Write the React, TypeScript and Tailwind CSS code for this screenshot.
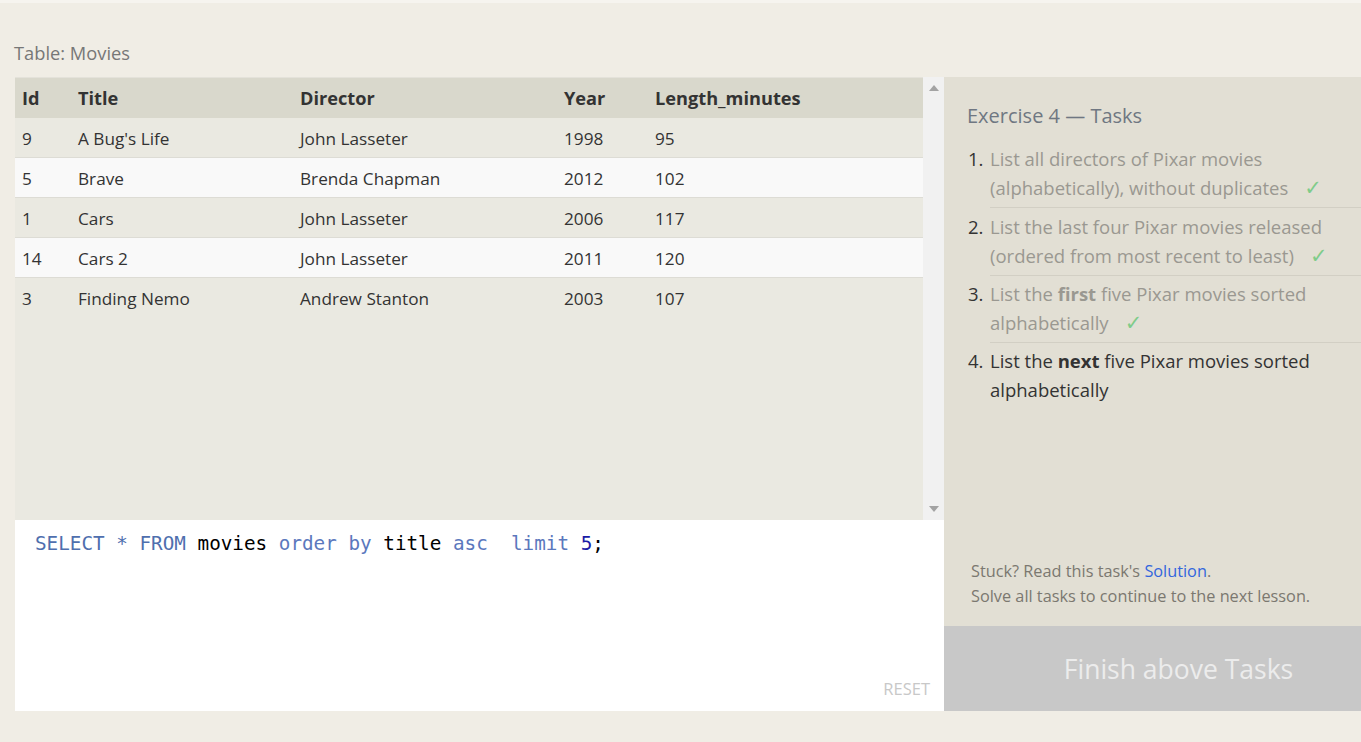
import React from "react";

const rows = [
  ["9", "A Bug's Life", "John Lasseter", "1998", "95"],
  ["5", "Brave", "Brenda Chapman", "2012", "102"],
  ["1", "Cars", "John Lasseter", "2006", "117"],
  ["14", "Cars 2", "John Lasseter", "2011", "120"],
  ["3", "Finding Nemo", "Andrew Stanton", "2003", "107"],
];

function Check() {
  return (
    <span className="ml-[16px] text-[21px] leading-[20px] text-[#7fcc8a]" style={{ fontFamily: '"DejaVu Sans", sans-serif' }}>
      ✓
    </span>
  );
}

export default function App() {
  return (
    <div
      className="w-[1361px] h-[742px] bg-[#f0ede5] overflow-hidden"
      style={{ fontFamily: '"Open Sans", sans-serif' }}
    >
      <div className="h-[3px] bg-[#f6f4ef]" />
      <div className="pl-[14px] pt-[38px] h-[74px] text-[18.3px] leading-[24px] text-[#777]">
        Table: Movies
      </div>
      <div className="flex ml-[15px]">
        <div className="w-[929px] flex flex-col">
          <div className="flex h-[443px] bg-[#eae9e1]">
            <div className="w-[908px]">
              <div className="flex h-[41px] items-center pt-[2px] bg-[#d9d8cc] border-t border-[#e4e2da] text-[18.2px] font-bold text-[#333]">
                <div className="w-[63px] pl-[7px]">Id</div>
                <div className="w-[222px]">Title</div>
                <div className="w-[264px]">Director</div>
                <div className="w-[91px]">Year</div>
                <div>Length_minutes</div>
              </div>
              {rows.map((r, i) => (
                <div
                  key={i}
                  className={`flex h-[40px] items-center pt-[2px] text-[17.2px] text-[#333] ${
                    i < rows.length - 1 ? "border-b border-[#dddcd5]" : ""
                  } ${i % 2 === 0 ? "bg-[#eae9e1]" : "bg-[#f9f9f9]"}`}
                >
                  <div className="w-[63px] pl-[7px]">{r[0]}</div>
                  <div className="w-[222px]">{r[1]}</div>
                  <div className="w-[264px]">{r[2]}</div>
                  <div className="w-[91px]">{r[3]}</div>
                  <div>{r[4]}</div>
                </div>
              ))}
            </div>
            <div className="w-[21px] bg-[#f1f1f1] flex flex-col justify-between items-center py-[8px]">
              <svg width="10" height="6" viewBox="0 0 10 6">
                <path d="M5 0 L10 6 L0 6 Z" fill="#a3a3a3" />
              </svg>
              <svg width="10" height="6" viewBox="0 0 10 6">
                <path d="M0 0 L10 0 L5 6 Z" fill="#a3a3a3" />
              </svg>
            </div>
          </div>
          <div className="h-[191px] bg-white flex flex-col">
            <div
              className="pl-[20px] pt-[12px] text-[19.3px] leading-[24px] flex-1 whitespace-pre"
              style={{ fontFamily: '"DejaVu Sans Mono", monospace' }}
            >
              <span className="text-[#4f6fae]">SELECT</span>
              <span className="text-[#4f6fae]"> * </span>
              <span className="text-[#4f6fae]">FROM</span>
              <span className="text-black"> movies </span>
              <span className="text-[#5b78bd]">order by</span>
              <span className="text-black"> title </span>
              <span className="text-[#5b78bd]">asc</span>
              <span>{"  "}</span>
              <span className="text-[#5b78bd]">limit</span>
              <span> </span>
              <span className="text-[#1a1aa6]">5</span>
              <span className="text-black">;</span>
            </div>
            <div className="text-right pr-[14px] pb-[12px] text-[16.5px] leading-[20px] text-[#c8c8c8]">
              RESET
            </div>
          </div>
        </div>
        <div className="w-[417px] flex flex-col">
          <div className="h-[549px] bg-[#e2dfd4] flex flex-col">
            <div className="pl-[23px] pt-[26px] text-[20px] leading-[26px] text-[#6f7782]">
              Exercise 4 — Tasks
            </div>
            <ol className="mt-[16px] pl-[24px] text-[18.5px] leading-[28.5px]">
              <li className="flex">
                <span className="w-[22px] text-[#333]">1.</span>
                <div className="flex-1 text-[#9a9891] border-b border-[#d2cfc4] pb-[5px]">
                  List all directors of Pixar movies
                  <br />
                  (alphabetically), without duplicates
                  <Check />
                </div>
              </li>
              <li className="flex mt-[5px]">
                <span className="w-[22px] text-[#333]">2.</span>
                <div className="flex-1 text-[#9a9891] border-b border-[#d2cfc4] pb-[5px]">
                  List the last four Pixar movies released
                  <br />
                  (ordered from most recent to least)
                  <Check />
                </div>
              </li>
              <li className="flex mt-[4px]">
                <span className="w-[22px] text-[#333]">3.</span>
                <div className="flex-1 text-[#9a9891] border-b border-[#d2cfc4] pb-[5px]">
                  List the <b className="font-bold">first</b> five Pixar movies sorted
                  <br />
                  alphabetically
                  <Check />
                </div>
              </li>
              <li className="flex mt-[4px]">
                <span className="w-[22px] text-[#333]">4.</span>
                <div className="flex-1 text-[#333]">
                  List the <b className="font-bold">next</b> five Pixar movies sorted
                  <br />
                  alphabetically
                </div>
              </li>
            </ol>
            <div className="mt-auto pl-[27px] pb-[17px] text-[16.3px] leading-[25px] text-[#7b7870]">
              <div>
                Stuck? Read this task's <span className="text-[#3366dd]">Solution</span>.
              </div>
              <div>Solve all tasks to continue to the next lesson.</div>
            </div>
          </div>
          <div className="h-[85px] bg-[#c8c8c8] flex items-center justify-center pl-[52px] pt-[3px] text-[26.5px] text-[#ececec]">
            Finish above Tasks
          </div>
        </div>
      </div>
    </div>
  );
}
